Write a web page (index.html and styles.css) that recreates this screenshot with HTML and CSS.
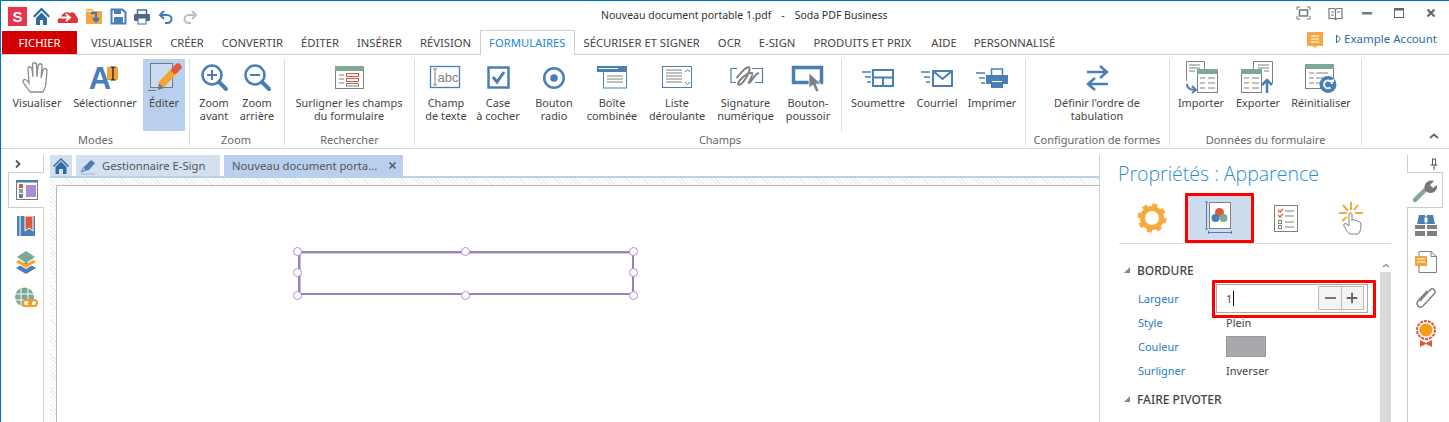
FILE: index.html
```html
<!DOCTYPE html>
<html lang="fr">
<head>
<meta charset="utf-8">
<title>Soda PDF Business</title>
<link rel="stylesheet" href="styles.css">
</head>
<body>
<div class="app">
  <header class="titlebar">
    <div class="qat">
      <svg width="21" height="24" viewBox="0 0 21 24"><rect x="1" y="3" width="19" height="19" fill="#e8344e"/><text x="10.5" y="18" text-anchor="middle" class="s-logo">S</text></svg>
      <svg width="27" height="24" viewBox="0 0 27 24"><path d="M13.5 3.5L22 12l-1.5 1.5-7-7-7 7L5 12z" fill="#2f6aa3"/><path d="M8 14l5.5-5.5L19 14v7h-4v-5h-3v5H8z" fill="#2f6aa3"/></svg>
      <svg width="26" height="24" viewBox="0 0 26 24"><path d="M3 19c-1-3 0-5 3-5 0-4 5-7 9-5 2-2 6 0 6 3 2 1 3 5 1 7z" fill="#e0353d"/><path d="M5 13.5h9M11 10l4 3.5-4 3.5" fill="none" stroke="#fff" stroke-width="2"/></svg>
      <svg width="25" height="24" viewBox="0 0 25 24"><path d="M5 5h6l2 2h8v13H5z" fill="#f5a742"/><path d="M5 6h6v2H5z" fill="#fff" opacity=".5"/><path d="M10 9h5v7M12 14l3 3.500 3-3.500" fill="none" stroke="#3a78b5" stroke-width="2"/></svg>
      <svg width="25" height="24" viewBox="0 0 25 24"><path d="M5.500 5.500h11l3 3v11h-14z" fill="#fff" stroke="#4a7fb5" stroke-width="2"/><rect x="8" y="5" width="7" height="5" fill="#4a7fb5"/><rect x="8" y="13" width="9" height="6" fill="#4a7fb5"/></svg>
      <svg width="22" height="24" viewBox="0 0 22 24"><rect x="6.500" y="6" width="9" height="5" fill="#fff" stroke="#4d6a88" stroke-width="1.500"/><rect x="3" y="10" width="16" height="7" rx="1" fill="#4d6a88"/><rect x="7" y="14" width="8" height="6" fill="#fff" stroke="#4d6a88"/></svg>
      <svg width="25" height="24" viewBox="0 0 25 24"><path d="M11 7L7 11l4 4M7.500 11H14c6 0 6 8 0 8h-2" fill="none" stroke="#3f78b5" stroke-width="2"/></svg>
      <svg width="25" height="24" viewBox="0 0 25 24"><path d="M14 7l4 4-4 4M17.500 11H11c-6 0-6 8 0 8h2" fill="none" stroke="#bdbdbd" stroke-width="2"/></svg>
    </div>
    <div class="doc-title"><span>Nouveau document portable 1.pdf</span><span>-</span><span>Soda PDF Business</span></div>
    <div class="winctl">
      <svg width="32" height="16" viewBox="0 0 32 16"><path d="M10 5V2h3M20 2h3v3M23 11v3h-3M13 14h-3v-3" fill="none" stroke="#777"/><rect x="12.500" y="5" width="8" height="6" fill="none" stroke="#777" stroke-width="1.500"/></svg>
      <svg width="32" height="16" viewBox="0 0 32 16"><path d="M10 3.500h5l1.500 1 1.500-1h5v10h-5l-1.500 1-1.500-1h-5zM16.500 4v10" fill="none" stroke="#777" stroke-width="1.200"/><path d="M12 7h3M12 10h3M18 7h3" stroke="#777"/></svg>
      <svg width="32" height="16" viewBox="0 0 32 16"><rect x="11" y="7" width="10" height="2.500" fill="#777"/></svg>
      <svg width="32" height="16" viewBox="0 0 32 16"><rect x="11.500" y="3.500" width="9" height="9" fill="none" stroke="#666"/><rect x="11" y="3" width="10" height="2.500" fill="#666"/></svg>
      <svg width="32" height="16" viewBox="0 0 32 16"><path d="M12.500 4.500l7 7M19.500 4.500l-7 7" stroke="#666" stroke-width="2.200"/></svg>
    </div>
  </header>

  <nav class="tabs">
    <div class="tab tab-file">FICHIER</div>
    <div class="tab">VISUALISER</div>
    <div class="tab">CRÉER</div>
    <div class="tab">CONVERTIR</div>
    <div class="tab">ÉDITER</div>
    <div class="tab">INSÉRER</div>
    <div class="tab">RÉVISION</div>
    <div class="tab tab-active">FORMULAIRES</div>
    <div class="tab">SÉCURISER ET SIGNER</div>
    <div class="tab">OCR</div>
    <div class="tab">E-SIGN</div>
    <div class="tab">PRODUITS ET PRIX</div>
    <div class="tab tab-aide">AIDE</div>
    <div class="tab">PERSONNALISÉ</div>
    <div class="account">
      <svg width="18" height="18" viewBox="0 0 18 18"><path d="M1 1h16v14h-6l-2 2-2-2H1z" fill="#f5a742"/><path d="M5 5h8M5 8h8M5 11h8" stroke="#fff"/></svg>
      <a class="account-link"><svg width="7" height="10" viewBox="0 0 7 10"><path d="M1.500 1l4 4-4 4z" fill="none" stroke="#2f6aa3"/></svg>Example Account</a>
    </div>
  </nav>

  <section class="ribbon">
    <div class="group g-modes">
      <div class="btns">
        <div class="rb w60"><svg width="44" height="36" viewBox="0 0 44 36"><path d="M15 33c-2-4-7-8-7-11 1-3 4-1 6 2L13 10c0-3 3-3 4 0l1 8-.500-12c0-3 4-3 4 0l.500 12 1-11c.500-3 4-3 4 0l-1 12 2-8c1-2 3-2 4 0l-1 13c0 4-2 6-3 9z" fill="#fff" stroke="#8c8c8c" stroke-width="1.300"/></svg><span>Visualiser</span></div>
        <div class="rb w76"><svg width="44" height="36" viewBox="0 0 44 36"><rect x="24" y="8" width="11" height="13" fill="#f0a53c"/><text x="17" y="30" text-anchor="middle" class="big-a">A</text><path d="M27.500 8h5M30 8v13M27.500 21h5" stroke="#111" stroke-width="1.200" fill="none"/></svg><span>Sélectionner</span></div>
        <div class="rb w42 on"><svg width="44" height="36" viewBox="0 0 44 36"><rect x="8.500" y="4.500" width="22" height="24" fill="#fff" fill-opacity=".25" stroke="#777"/><path d="M6 31.500h8" stroke="#777"/><path d="M19 26l15-16" stroke="#f5a331" stroke-width="7.500"/><path d="M16 31l1-7 5 5z" fill="#777"/><path d="M33 11l3-3" stroke="#e0573a" stroke-width="7" stroke-linecap="round"/></svg><span>Éditer</span></div>
      </div>
      <div class="glabel">Modes</div>
    </div>
    <div class="group g-zoom">
      <div class="btns">
        <div class="rb w42"><svg width="44" height="36" viewBox="0 0 44 36"><circle cx="20" cy="16" r="9.500" fill="none" stroke="#4a7fb5" stroke-width="2.500"/><path d="M27 23l7 7" stroke="#4a7fb5" stroke-width="4" stroke-linecap="round"/><path d="M15 16h10M20 11v10" stroke="#4a7fb5" stroke-width="2"/></svg><span>Zoom<br>avant</span></div>
        <div class="rb w44"><svg width="44" height="36" viewBox="0 0 44 36"><circle cx="20" cy="16" r="9.500" fill="none" stroke="#4a7fb5" stroke-width="2.500"/><path d="M27 23l7 7" stroke="#4a7fb5" stroke-width="4" stroke-linecap="round"/><path d="M15 16h10" stroke="#4a7fb5" stroke-width="2"/></svg><span>Zoom<br>arrière</span></div>
      </div>
      <div class="glabel">Zoom</div>
    </div>
    <div class="group g-find">
      <div class="btns">
        <div class="rb w118"><svg width="44" height="36" viewBox="0 0 44 36"><rect x="8.500" y="7.500" width="28" height="22" fill="#fff" stroke="#808080"/><rect x="8" y="7" width="29" height="5" fill="#7ba897"/><path d="M12 16h5M12 20h5M12 24h5" stroke="#808080"/><rect x="19.500" y="14.500" width="12" height="3" fill="#fff" stroke="#e0573a"/><rect x="19.500" y="19.500" width="12" height="3" fill="#fff" stroke="#e0573a"/><rect x="19.500" y="24.500" width="12" height="2.500" fill="#fff" stroke="#808080"/></svg><span>Surligner les champs<br>du formulaire</span></div>
      </div>
      <div class="glabel">Rechercher</div>
    </div>
    <div class="group g-fields">
      <div class="btns">
        <div class="rb w52"><svg width="44" height="36" viewBox="0 0 44 36"><rect x="6.500" y="7.500" width="29" height="21" fill="none" stroke="#4a7fb5" stroke-width="1.300"/><path d="M9 10h4M11 10v16M9 26h4" stroke="#808080" fill="none"/><text x="13.500" y="22.500" class="abc">abc</text></svg><span>Champ<br>de texte</span></div>
        <div class="rb w52"><svg width="44" height="36" viewBox="0 0 44 36"><rect x="12.500" y="8.500" width="20" height="20" fill="none" stroke="#4a7fb5" stroke-width="2.500"/><path d="M17 18l4 5 7-10" fill="none" stroke="#4a7fb5" stroke-width="3"/></svg><span>Case<br>à cocher</span></div>
        <div class="rb w60"><svg width="44" height="36" viewBox="0 0 44 36"><circle cx="22" cy="19" r="9.800" fill="none" stroke="#4a7fb5" stroke-width="2.500"/><circle cx="22" cy="19" r="3.800" fill="#4a7fb5"/></svg><span>Bouton<br>radio</span></div>
        <div class="rb w56"><svg width="44" height="36" viewBox="0 0 44 36"><rect x="13.500" y="10" width="23" height="19" fill="#fff" stroke="#4a7fb5"/><rect x="7" y="7" width="30" height="6" fill="#4a7fb5"/><path d="M9 9.500h19" stroke="#fff"/><path d="M17 17h16M17 20h16M17 23h16" stroke="#808080"/></svg><span>Boîte<br>combinée</span></div>
        <div class="rb w74"><svg width="44" height="36" viewBox="0 0 44 36"><rect x="7.500" y="7.500" width="29" height="21" fill="none" stroke="#4a7fb5"/><path d="M11 11h16M11 14h16M11 17h16M11 20h16M11 23h16" stroke="#808080"/><path d="M30 13l2.500-2.500L35 13M30 23l2.500 2.500L35 23" fill="none" stroke="#4a7fb5"/></svg><span>Liste<br>déroulante</span></div>
        <div class="rb w63"><svg width="44" height="36" viewBox="0 0 44 36"><path d="M13 9.500H7v14h5M28 9.500h10.500v14H31" fill="none" stroke="#4a7fb5" stroke-width="1.200"/><path d="M12.500 19C17 14 22 7 25 8.500 28 10 19 26 15 25.700 11 25 22 13 28 14c2 1-4 10-3 10 2 0 5-9 10-10" fill="none" stroke="#808080" stroke-width="2"/></svg><span>Signature<br>numérique</span></div>
        <div class="rb w62"><svg width="44" height="36" viewBox="0 0 44 36"><rect x="7.500" y="8.500" width="28" height="15" fill="none" stroke="#4a7fb5" stroke-width="3.500"/><path d="M23 14v15l4-3 3 7 3-1-3-7h5z" fill="#808080" stroke="#fff" stroke-width=".7"/></svg><span>Bouton-<br>poussoir</span></div>
        <div class="vsep"></div>
        <div class="rb w60 ml"><svg width="44" height="36" viewBox="0 0 44 36"><rect x="17" y="11" width="20" height="16" fill="none" stroke="#4a7fb5" stroke-width="2"/><path d="M17 18.500h20M27 19v8" stroke="#4a7fb5" stroke-width="2"/><path d="M6 13h9M9 18h6M11 23h4" stroke="#4a7fb5" stroke-width="1.500"/></svg><span>Soumettre</span></div>
        <div class="rb w58"><svg width="44" height="36" viewBox="0 0 44 36"><rect x="18" y="12" width="19" height="15" fill="none" stroke="#4a7fb5" stroke-width="2"/><path d="M18 12l9.500 8 9.500-8" fill="none" stroke="#4a7fb5" stroke-width="2"/><path d="M6 13h9M9 18h6M11 23h4" stroke="#4a7fb5" stroke-width="1.500"/></svg><span>Courriel</span></div>
        <div class="rb w52"><svg width="44" height="36" viewBox="0 0 44 36"><rect x="21.500" y="10" width="11" height="7" fill="#fff" stroke="#4a7fb5" stroke-width="1.500"/><path d="M16 16h22v9H33v4H21v-4h-5z" fill="#4a7fb5"/><rect x="22" y="22" width="10" height="1" fill="#fff"/><path d="M6 14h9M9 19h6M11 24h4" stroke="#4a7fb5" stroke-width="1.500"/></svg><span>Imprimer</span></div>
      </div>
      <div class="glabel">Champs</div>
    </div>
    <div class="group g-config">
      <div class="btns">
        <div class="rb w134"><svg width="44" height="36" viewBox="0 0 44 36"><path d="M12 13h20M25 7l7 6-7 6M33 25H13M20 19l-7 6 7 6" fill="none" stroke="#4a7fb5" stroke-width="2.500"/></svg><span>Définir l'ordre de<br>tabulation</span></div>
      </div>
      <div class="glabel">Configuration de formes</div>
    </div>
    <div class="group g-data">
      <div class="btns">
        <div class="rb w52"><svg width="44" height="36" viewBox="0 0 44 36"><path d="M7.500 22V2.500h18V10" fill="#fff" stroke="#808080"/><path d="M10 6h11M10 9h11M10 12h6" stroke="#808080"/><rect x="18.500" y="10.500" width="20" height="23" fill="#fff" stroke="#808080"/><rect x="18" y="10" width="21" height="5" fill="#7ba897"/><path d="M21 19h5M29 19h7M21 24h5M29 24h7M21 29h5M29 29h7" stroke="#808080"/><path d="M8 25c0 4 3 6 8 6M13 27l4 4-4 3" fill="none" stroke="#4a7fb5" stroke-width="2"/></svg><span>Importer</span></div>
        <div class="rb w62"><svg width="44" height="36" viewBox="0 0 44 36"><path d="M17.500 10V2.500h19v22" fill="#fff" stroke="#808080"/><path d="M22 6h11M22 9h11M28 12h5" stroke="#808080"/><rect x="5.500" y="10.500" width="20" height="23" fill="#fff" stroke="#808080"/><rect x="5" y="10" width="21" height="5" fill="#7ba897"/><path d="M8 19h5M16 19h7M8 24h5M16 24h7M8 29h5M16 29h7" stroke="#808080"/><path d="M31 34V21M26 26l5-5 5 5" fill="none" stroke="#4a7fb5" stroke-width="2.500"/></svg><span>Exporter</span></div>
        <div class="rb w64"><svg width="44" height="36" viewBox="0 0 44 36"><rect x="6.500" y="5.500" width="28" height="24" fill="#fff" stroke="#808080"/><rect x="6" y="5" width="29" height="5" fill="#7ba897"/><path d="M10 14h5M17 14h12M10 19h5M17 19h8M10 24h5M17 24h6" stroke="#808080"/><circle cx="29" cy="25.500" r="8.500" fill="#4a7fb5"/><path d="M33 25a4 4 0 1 0-1.500 3.500" fill="none" stroke="#fff" stroke-width="1.800"/><path d="M28 23h7v-3z" fill="#fff"/></svg><span>Réinitialiser</span></div>
      </div>
      <div class="glabel">Données du formulaire</div>
    </div>
    <div class="collapse"><svg width="12" height="8" viewBox="0 0 12 8"><path d="M2 6l4-3.500L10 6" fill="none" stroke="#666" stroke-width="2"/></svg></div>
  </section>

  <main class="main">
    <aside class="rail rail-left">
      <div class="rail-head"><svg width="8" height="10" viewBox="0 0 8 10"><path d="M2 1.500L5.500 5 2 8.500" fill="none" stroke="#555" stroke-width="1.800"/></svg></div>
      <div class="rail-item rail-on"><svg width="24" height="24" viewBox="0 0 24 24"><rect x="1.500" y="2.500" width="21" height="19" fill="#fff" stroke="#777"/><rect x="1" y="2" width="22" height="2.500" fill="#4a7fb5"/><rect x="4" y="6" width="4" height="4" fill="#e0573a"/><rect x="4" y="11" width="4" height="4" fill="#7ba897"/><rect x="4" y="16" width="4" height="4" fill="#4a7fb5"/><rect x="11" y="7" width="10" height="12" fill="#ac8ccf"/></svg></div>
      <div class="rail-item"><svg width="22" height="24" viewBox="0 0 22 24"><rect x="2" y="2" width="18" height="20" fill="#4a7fb5"/><path d="M5 2v20" stroke="#fff"/><path d="M10 2h8v15l-4-3-4 3z" fill="#e0573a" stroke="#fff"/></svg></div>
      <div class="rail-item"><svg width="24" height="24" viewBox="0 0 24 24"><path d="M12 12L2 18l10 6 10-6z" fill="#4a7fb5"/><path d="M2 13l10 6 10-6-3-2-7 4-7-4z" fill="#fff"/><path d="M2 12l10 6 10-6-3-2-7 4-7-4z" fill="#f5a331"/><path d="M12 1L3 7l9 6 9-6z" fill="#7ba897"/></svg></div>
      <div class="rail-item"><svg width="24" height="24" viewBox="0 0 24 24"><circle cx="10.500" cy="11" r="9.500" fill="#7ba897"/><path d="M1 8h19M1 14h19M7 2v18M14 2v18" stroke="#fff"/><rect x="9" y="14" width="8" height="6" rx="3" fill="#fff" stroke="#f59a1b" stroke-width="2"/><rect x="15" y="14" width="8" height="6" rx="3" fill="none" stroke="#f59a1b" stroke-width="2"/></svg></div>
    </aside>

    <section class="docs">
      <div class="doctabs">
        <div class="dtab dtab-home"><svg width="18" height="18" viewBox="0 0 18 18"><path d="M9 1l8 8-1 1-7-7-7 7-1-1z" fill="#2f6aa3"/><path d="M3.500 10L9 4.500 14.500 10v7H11v-5H7v5H3.500z" fill="#2f6aa3"/></svg></div>
        <div class="dtab dtab-esign"><svg width="18" height="18" viewBox="0 0 18 18"><path d="M5 10l7-7 4 3-6 7-4 1z" fill="#4a7fb5"/><path d="M5 10l-3 5 5-2" fill="none" stroke="#4a7fb5"/><path d="M2 17h14" stroke="#9db9dc"/></svg><span>Gestionnaire E-Sign</span></div>
        <div class="dtab dtab-doc"><span>Nouveau document porta...</span><svg width="9" height="9" viewBox="0 0 9 9"><path d="M1.500 1.500l6 6M7.500 1.500l-6 6" stroke="#555" stroke-width="1.500"/></svg></div>
      </div>
      <div class="hatch">
        <div class="page">
          <div class="field">
            <i class="h h-tl"></i><i class="h h-tc"></i><i class="h h-tr"></i>
            <i class="h h-ml"></i><i class="h h-mr"></i>
            <i class="h h-bl"></i><i class="h h-bc"></i><i class="h h-br"></i>
          </div>
        </div>
      </div>
    </section>

    <section class="props">
      <h2 class="props-title">Propriétés : Apparence</h2>
      <div class="props-icons">
        <div class="pi pi-gear"><svg width="30" height="30" viewBox="0 0 30 30"><circle cx="15" cy="15" r="9.500" fill="none" stroke="#f9a83c" stroke-width="5"/><circle cx="15" cy="15" r="12.500" fill="none" stroke="#f9a83c" stroke-width="4" stroke-dasharray="5 4.800"/></svg></div>
        <div class="pi pi-sel"><svg width="30" height="34" viewBox="0 0 30 34"><path d="M1.500 1v27M0 1h3M0 28h3M3.500 31.500h23M3.500 30v3M26.500 30v3" stroke="#4a7fb5" fill="none"/><rect x="4.500" y="1.500" width="21" height="26" fill="#fff" stroke="#808080"/><circle cx="14.500" cy="11.500" r="4.500" fill="#e0573a"/><circle cx="10.500" cy="17" r="4" fill="#4a7fb5"/><circle cx="18.500" cy="17" r="4" fill="#7ba897"/></svg></div>
        <div class="pi pi-list"><svg width="26" height="28" viewBox="0 0 26 28"><rect x="1.500" y="1.500" width="23" height="26" fill="#fff" stroke="#808080"/><path d="M5 6l2 2 3-3M5 11l2 2 3-3" fill="none" stroke="#e0573a" stroke-width="1.300"/><path d="M12 7h9M12 12h9M12 18h9M12 23h9" stroke="#808080"/><rect x="5.500" y="16.500" width="3" height="3" fill="none" stroke="#808080"/><rect x="5.500" y="21.500" width="3" height="3" fill="none" stroke="#808080"/></svg></div>
        <div class="pi pi-click"><svg width="28" height="34" viewBox="0 0 28 34"><path d="M13 1v8M5 4l5 6M20 4l-4 5M1 12h8M17 12h8M4 20l5-4" stroke="#f9a83c" stroke-width="2"/><path d="M13 33c-3 0-5-4-7-8-1-3 2-3 4-1l1 1V14c0-3 3-3 3 0v6c0-2 3-2 3 0 0-1 3-1 3 1 1-1 3 0 3 2 0 5-1 10-4 10z" fill="#fff" stroke="#808080"/></svg></div>
      </div>
      <div class="props-body">
        <div class="props-list">
          <div class="sec sec-first"><i class="tri"></i>BORDURE</div>
          <div class="row"><label>Largeur</label>
            <div class="spin">
              <span class="spin-val">1</span>
              <span class="spin-btn">
                <svg width="22" height="22" viewBox="0 0 22 22"><path d="M6 11h11" stroke="#777" stroke-width="2"/></svg>
                <svg width="22" height="22" viewBox="0 0 22 22"><path d="M5 11h11M10.500 5.500v11" stroke="#666" stroke-width="2"/></svg>
              </span>
              <i class="annot"></i>
            </div>
          </div>
          <div class="row"><label>Style</label><span class="val">Plein</span></div>
          <div class="row"><label>Couleur</label><span class="swatch"></span></div>
          <div class="row"><label>Surligner</label><span class="val">Inverser</span></div>
          <div class="sec"><i class="tri"></i>FAIRE PIVOTER</div>
        </div>
        <div class="scroll">
          <div class="scroll-up"><svg width="8" height="5" viewBox="0 0 8 5"><path d="M1 4l3-2.500L7 4" fill="none" stroke="#888" stroke-width="1.200"/></svg></div>
          <div class="scroll-thumb"></div>
        </div>
      </div>
    </section>

    <aside class="rail rail-right">
      <div class="rail-head"><svg width="10" height="12" viewBox="0 0 10 12"><path d="M3 1h4M3.500 1v6M6.500 1v6M1.500 7h7M5 7v5" stroke="#555" fill="none"/></svg></div>
      <div class="rail-item rail-on"><svg width="26" height="26" viewBox="0 0 26 26"><path d="M3 23L14 12" stroke="#7ba897" stroke-width="4.500" stroke-linecap="round"/><path d="M13 13c-2-6 3-11 9-9l-4 4 3 3 4-3c1 6-5 10-10 7z" fill="#777"/></svg></div>
      <div class="rail-item"><svg width="24" height="24" viewBox="0 0 24 24"><path d="M5 1h6v9H3zM13 1h6l2 9h-8z" fill="#4a7fb5"/><rect x="10" y="3" width="4" height="6" fill="#fff" stroke="#4a7fb5"/><rect x="1" y="11" width="10" height="4" fill="#808080"/><rect x="13" y="11" width="10" height="4" fill="#808080"/><rect x="1" y="17" width="10" height="5" fill="#808080"/><rect x="13" y="17" width="10" height="5" fill="#808080"/></svg></div>
      <div class="rail-item"><svg width="24" height="24" viewBox="0 0 24 24"><path d="M5 1.500h12l5.500 5v16H5z" fill="#fff" stroke="#808080"/><path d="M17 1.500v5h5.500" fill="none" stroke="#808080"/><path d="M1 6h12v10H6l-2 3v-3H1z" fill="#f0a53c"/><path d="M3 9h8M3 12h8" stroke="#fff"/></svg></div>
      <div class="rail-item"><svg width="24" height="24" viewBox="0 0 24 24"><path d="M6 15L16 4c3-3 7 1 4 4L9 20c-3 3-8-1-5-5l9-10" fill="none" stroke="#808080" stroke-width="1.500"/></svg></div>
      <div class="rail-item"><svg width="22" height="28" viewBox="0 0 22 28"><circle cx="11" cy="10" r="9" fill="#fff" stroke="#e0573a" stroke-width="2" stroke-dasharray="3 1"/><circle cx="11" cy="10" r="6.500" fill="#f59a1b"/><path d="M5 20l6 3 6-3v7l-6-3-6 3z" fill="#e0573a"/></svg></div>
    </aside>
  </main>
</div>
</body>
</html>
```

FILE: styles.css
```css
* { box-sizing: border-box; }
html, body { margin: 0; padding: 0; height: 100%; overflow: hidden; background: #fff; }
body { font-family: "Noto Sans", "Open Sans", sans-serif; font-size: 11px; color: #444; }
svg { display: block; flex-shrink: 0; overflow: visible; }

.app { width: 1449px; height: 422px; border-top: 1px solid #0072c6; border-left: 1px solid #0072c6; display: flex; flex-direction: column; overflow: hidden; }

/* title bar */
.titlebar { height: 30px; display: flex; align-items: flex-start; flex-shrink: 0; }
.qat { width: 600px; display: flex; padding: 3px 0 0 6px; }
.s-logo { font: bold 15px "Liberation Sans", sans-serif; fill: #fff; }
.doc-title { display: flex; gap: 10px; padding-top: 7px; line-height: 15px; color: #333; font-size: 10.5px; }
.winctl { margin-left: auto; display: flex; padding: 4px 0 0 0; margin-right: 2px; }

/* tabs */
.tabs { height: 24px; flex-shrink: 0; display: flex; border-bottom: 1px solid #cfcfcf; padding-left: 1px; }
.tab { padding: 0 9px; line-height: 23px; height: 24px; font-size: 11.25px; color: #444; white-space: nowrap; }
.tab-file { width: 75px; margin-right: 5px; padding: 0; text-align: center; background: #d40000; color: #fff; height: 23px; }
.tab-active { color: #1d86d6; background: #fff; border: 1px solid #cfcfcf; border-bottom: 0; padding: 0 8px; margin-top: -1px; height: 25px; }
.tab-aide { margin-left: 2px; margin-right: -1px; }
.account { margin-left: auto; display: flex; align-items: flex-start; margin-right: 12px; }
.account-link { display: flex; align-items: center; gap: 2px; margin-left: 11px; color: #2f6aa3; font-size: 11.5px; line-height: 16px; height: 16px; }

/* ribbon */
.ribbon { height: 94px; flex-shrink: 0; display: flex; padding: 4px 0 2px; border-bottom: 1px solid #d5d5d5; }
.group { display: flex; flex-direction: column; border-right: 1px solid #dcdcdc; }
.g-modes { width: 189px; padding-left: 6px; }
.g-zoom { width: 95px; padding-left: 3px; }
.g-find { width: 130px; padding-left: 5px; }
.g-fields { width: 611px; padding-left: 5px; }
.g-config { width: 144px; padding-left: 4px; }
.g-data { width: 192px; padding-left: 5px; }
.btns { height: 72px; display: flex; flex-shrink: 0; }
.rb { height: 72px; display: flex; flex-direction: column; align-items: center; flex-shrink: 0; font-size: 10.9px; line-height: 13px; color: #444; text-align: center; white-space: nowrap; }
.rb svg { margin-bottom: 1px; }
.rb.on { background: #b9cfee; }
.w42 { width: 42px; } .w44 { width: 44px; } .w52 { width: 52px; } .w56 { width: 56px; } .w58 { width: 58px; }
.w60 { width: 60px; } .w62 { width: 62px; } .w63 { width: 63px; } .w64 { width: 64px; } .w74 { width: 74px; }
.w76 { width: 76px; } .w118 { width: 118px; } .w134 { width: 134px; }
.ml { margin-left: 6px; }
.vsep { width: 1px; margin-left: 2px; background: #dcdcdc; flex-shrink: 0; }
.glabel { flex: 1; text-align: center; font-size: 11px; line-height: 14px; padding-top: 2px; color: #666; margin-left: -5px; white-space: nowrap; }
.big-a { font: bold 31px "Liberation Sans", sans-serif; fill: #4a7fb5; }
.abc { font: 13px "Liberation Sans", sans-serif; fill: #808080; }
.collapse { flex: 1; display: flex; justify-content: flex-end; align-items: flex-end; padding: 0 9px 6px 0; }

/* main */
.main { flex: 1; min-height: 0; display: flex; }
.rail { display: flex; flex-direction: column; align-items: center; margin-top: 6px; flex-shrink: 0; }
.rail-left { width: 43px; border-right: 1px solid #ccc; }
.rail-right { width: 42px; border-left: 1px solid #ccc; }
.rail-head { height: 17px; width: 100%; display: flex; align-items: center; justify-content: center; }
.rail-left .rail-head { padding-right: 8px; }
.rail-right .rail-head { padding-left: 10px; }
.rail-item { height: 36px; width: 100%; display: flex; align-items: center; justify-content: center; }
.rail-left .rail-item { padding-left: 7px; }
.rail-right .rail-item { padding-right: 6px; }
.rail-left .rail-on { width: 36px; margin: 0 -1px 0 auto; background: #fff; border: 1px solid #ccc; border-right: 0; padding: 0; position: relative; }
.rail-right .rail-on { width: 36px; margin: 0 auto 0 -1px; background: #fff; border: 1px solid #ccc; border-left: 0; padding: 0; position: relative; }

.docs { width: 1056px; flex-shrink: 0; display: flex; flex-direction: column; margin-top: 6px; border-right: 1px solid #ccc; }
.doctabs { display: flex; gap: 4px; height: 23px; margin-left: 6px; border-bottom: 2px solid #b9cfee; flex-shrink: 0; }
.dtab { height: 21px; display: flex; align-items: center; font-size: 11.25px; color: #555; white-space: nowrap; }
.dtab-home { width: 22px; background: #d4dff0; justify-content: center; }
.dtab-esign { width: 144px; background: #d4dff0; padding-left: 3px; gap: 5px; }
.dtab-doc { width: 179px; background: #b9cfee; padding-left: 8px; justify-content: space-between; padding-right: 6px; }
.hatch { flex: 1; margin-left: 6px; padding: 7px 0 0 6px; background: repeating-linear-gradient(45deg, #ececec 0 1px, #fff 1px 3px); }
.page { height: 100%; background: #fff; border-top: 1px solid #bbb; border-left: 1px solid #bbb; position: relative; }
.field { position: absolute; left: 241px; top: 65px; width: 336px; height: 44px; border: 2px solid #9a80bc; box-shadow: inset 0 1px 0 #d0d0d0, inset 1px 0 0 #c0c0c0; }
.h { position: absolute; width: 9px; height: 9px; border-radius: 50%; background: #fff; border: 1px solid #b58ae0; }
.h-tl { left: -7px; top: -6px; } .h-tc { left: 161px; top: -6px; } .h-tr { right: -6px; top: -6px; }
.h-ml { left: -7px; top: 15px; } .h-mr { right: -6px; top: 15px; }
.h-bl { left: -7px; bottom: -7px; } .h-bc { left: 161px; bottom: -7px; } .h-br { right: -6px; bottom: -7px; }

/* properties */
.props { width: 307px; flex-shrink: 0; padding-left: 19px; padding-right: 16px; }
.props-title { margin: 12px 0 0 -1px; font: 300 19.5px/26px "Open Sans", sans-serif; color: #2a8dd4; white-space: nowrap; height: 32px; }
.props-icons { display: flex; height: 51px; border-bottom: 1px solid #ddd; }
.pi { display: flex; align-items: center; justify-content: center; height: 50px; }
.pi-gear { width: 66px; }
.pi-sel { width: 69px; background: #cfdcef; border: 3px solid #f00; border-radius: 1px; }
.pi-list { width: 64px; }
.pi-click { width: 68px; }
.props-body { display: flex; }
.props-list { flex: 1; min-width: 0; }
.sec { height: 24px; margin: 5px 0 4px; display: flex; align-items: center; font-size: 12px; font-weight: 500; color: #444; padding-left: 18px; position: relative; }
.sec-first { margin-top: 14px; }
.tri { position: absolute; left: 5px; top: 9px; width: 0; height: 0; border-style: solid; border-width: 0 0 6px 6px; border-color: transparent transparent #888 transparent; }
.row { height: 24px; display: flex; align-items: center; font-size: 11px; }
.row label { width: 107px; padding-left: 19px; color: #2a78c8; flex-shrink: 0; }
.val { color: #444; }
.swatch { width: 40px; height: 21px; background: #a7a9ad; border: 1px solid #999; }
.spin { width: 152px; height: 29px; margin-left: -10px; border: 1px solid #aaa; display: flex; align-items: center; justify-content: space-between; padding: 0 3px 0 9px; position: relative; flex-shrink: 0; background: #fff; }
.spin-val { border-right: 1px solid #111; padding-right: 1px; line-height: 15px; }
.spin-btn { display: flex; border: 1px solid #bbb; background: #f4f4f4; }
.spin-btn svg + svg { border-left: 1px solid #bbb; }
.annot { position: absolute; left: -5px; right: -9px; top: -5px; bottom: -6px; border: 3px solid #f00; border-radius: 1px; }
.scroll { width: 11px; flex-shrink: 0; margin-top: 14px; }
.scroll-up { height: 14px; display: flex; align-items: center; justify-content: center; }
.scroll-thumb { height: 200px; background: #d9d9d9; }
```
